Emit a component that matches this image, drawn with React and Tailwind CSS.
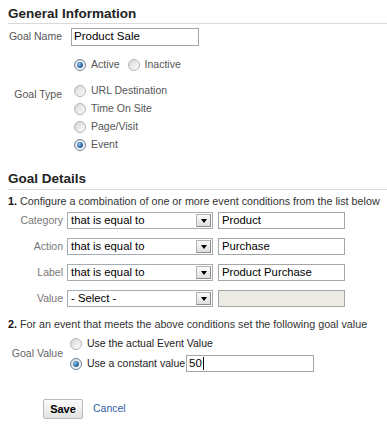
import React from "react";

const LABEL_FONT = "font-['Liberation_Sans',Arial,sans-serif]";

function Radio({ checked }) {
  return (
    <span
      className={`flex h-[12px] w-[12px] shrink-0 items-center justify-center rounded-full border ${
        checked
          ? "border-[#6f8193] bg-[linear-gradient(135deg,#d9dde1,#ffffff)]"
          : "border-[#b3b3b3] bg-[linear-gradient(135deg,#d6d6d6,#ffffff)]"
      }`}
    >
      {checked && (
        <span className="h-[6px] w-[6px] rounded-full bg-[radial-gradient(circle_at_35%_35%,#8fc0ea,#1c5a93_70%)]" />
      )}
    </span>
  );
}

function Select({ value }) {
  return (
    <div className="flex h-[17px] w-[146px] items-center border border-[#a5acb2] bg-white pl-[3px] pr-[1px] text-[11.3px] leading-none text-black">
      <span className="flex-1 whitespace-nowrap">{value}</span>
      <span className="flex h-[13px] w-[15px] items-center justify-center border border-[#b4b4b4] border-r-[#8c8c8c] border-b-[#8c8c8c] bg-[linear-gradient(#fbfbfb,#dedede)]">
        <span className="h-0 w-0 border-l-[3.5px] border-r-[3.5px] border-t-[4px] border-l-transparent border-r-transparent border-t-black" />
      </span>
    </div>
  );
}

function TextBox({ value, disabled, width = "w-[127px]" }) {
  return (
    <div
      className={`flex h-[17px] ${width} items-center border border-[#a5a5a5] pl-[3px] text-[11.3px] leading-none text-black ${
        disabled ? "bg-[#ebebe4]" : "bg-white"
      }`}
    >
      {value}
    </div>
  );
}

const CONDITIONS = [
  { label: "Category", op: "that is equal to", value: "Product" },
  { label: "Action", op: "that is equal to", value: "Purchase" },
  { label: "Label", op: "that is equal to", value: "Product Purchase" },
  { label: "Value", op: "- Select -", value: "", disabled: true },
];

export default function App() {
  return (
    <div className={`h-[440px] w-[387px] overflow-hidden bg-white pl-[8px] ${LABEL_FONT} text-[#333]`}>
      {/* General Information */}
      <h2 className="border-b border-[#dadada] pb-[2px] pt-[6px] text-[13.5px] font-bold leading-[15px] text-[#222]">
        General Information
      </h2>

      <div className="mt-[4px] flex h-[18px] items-center">
        <span className="w-[54px] text-right text-[10.5px] text-[#555]">Goal Name</span>
        <div className="ml-[9px] flex h-[18px] w-[128px] items-center border border-[#a5a5a5] pl-[2px] text-[11.5px] text-black">
          Product Sale
        </div>
      </div>

      <div className="ml-[66px] mt-[10px] flex h-[18px] items-center text-[10.5px] text-[#555]">
        <Radio checked />
        <span className="ml-[5px]">Active</span>
        <span className="ml-[8px]">
          <Radio />
        </span>
        <span className="ml-[5px]">Inactive</span>
      </div>

      <div className="mt-[8px] flex">
        <span className="mt-[3px] h-[18px] w-[54px] text-right text-[10.5px] leading-[18px] text-[#555]">Goal Type</span>
        <div className="ml-[12px] flex flex-col text-[10.5px] text-[#555]">
          {["URL Destination", "Time On Site", "Page/Visit", "Event"].map((t) => (
            <div key={t} className="flex h-[18px] items-center">
              <Radio checked={t === "Event"} />
              <span className="ml-[5px]">{t}</span>
            </div>
          ))}
        </div>
      </div>

      {/* Goal Details */}
      <h2 className="mt-[17px] border-b border-[#dadada] pb-[2px] text-[13.5px] font-bold leading-[16px] text-[#222]">
        Goal Details
      </h2>

      <p className="mt-[4px] h-[14px] whitespace-nowrap text-[10.75px] leading-[14px] text-[#333]">
        <span className="font-bold text-[#111]">1.</span> Configure a combination of one or more event conditions from the list below
      </p>

      <div className="mt-[4px] flex flex-col gap-[9px]">
        {CONDITIONS.map((c) => (
          <div key={c.label} className="flex h-[17px] items-center">
            <span className="w-[55px] text-right text-[10.5px] text-[#777]">{c.label}</span>
            <div className="ml-[4px]">
              <Select value={c.op} />
            </div>
            <div className="ml-[5px]">
              <TextBox value={c.value} disabled={c.disabled} />
            </div>
          </div>
        ))}
      </div>

      <p className="mt-[10px] h-[14px] whitespace-nowrap text-[10.75px] leading-[14px] text-[#333]">
        <span className="font-bold text-[#111]">2.</span> For an event that meets the above conditions set the following goal value
      </p>

      <div className="mt-[4px] flex">
        <span className="flex w-[55px] items-center justify-end text-[10.5px] text-[#666]">Goal Value</span>
        <div className="ml-[7px] flex flex-col text-[10.5px] text-[#222]">
          <div className="flex h-[18px] items-center">
            <Radio />
            <span className="ml-[5px]">Use the actual Event Value</span>
          </div>
          <div className="mt-[1px] flex h-[19px] items-center">
            <Radio checked />
            <span className="ml-[5px]">Use a constant value</span>
            <div className="ml-[1px] flex h-[17px] w-[128px] items-center border border-[#a5a5a5] bg-white pl-[2px] text-[11.5px] leading-none text-black">
              50
              <span className="ml-[1px] h-[13px] w-[1px] bg-black" />
            </div>
          </div>
        </div>
      </div>

      <div className="mt-[26px] flex items-center">
        <button
          type="button"
          className="ml-[35px] flex h-[20px] w-[40px] items-center justify-center rounded-[2px] border border-[#b9b9b9] bg-[linear-gradient(#fbfbfb,#e2e2e2)] text-[11px] font-bold text-black"
        >
          Save
        </button>
        <a className="ml-[10px] text-[10.5px] text-[#2f62a8]">Cancel</a>
      </div>
    </div>
  );
}
